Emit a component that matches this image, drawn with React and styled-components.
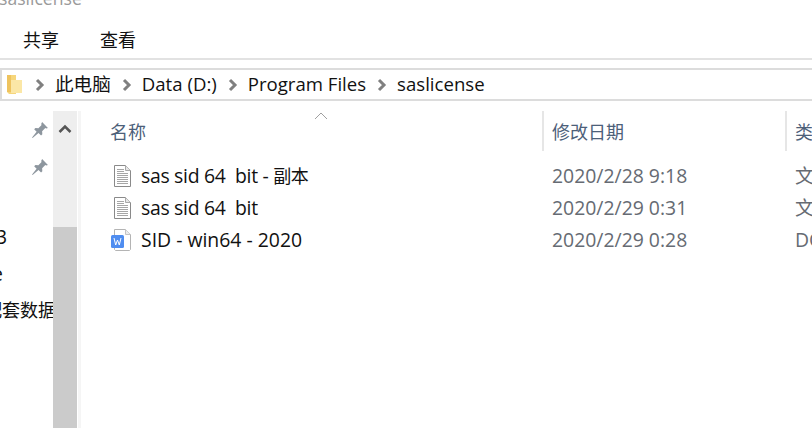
import React from "react"
import styled, { createGlobalStyle } from "styled-components"

const UI_FONT = `"Open Sans", "Noto Sans CJK SC", sans-serif`

const GlobalStyle = createGlobalStyle`
	html, body {
		margin: 0;
		padding: 0;
		background: #fff;
		overflow: hidden;
	}
	* {
		box-sizing: border-box;
	}
`

const Page = styled.div`
	width: 812px;
	height: 428px;
	display: flex;
	flex-direction: column;
	overflow: hidden;
	font-family: ${UI_FONT};
	font-size: 18px;
	color: #000;
	background: #fff;
`
const TitleBar = styled.div`
	height: 20px;
	margin-top: -12px;
	flex: none;
	font-size: 17.6px;
	line-height: 20px;
	color: #9a9a9a;
	transform: translateX(-1px);
`
const Ribbon = styled.div`
	height: 52px;
	flex: none;
	display: flex;
	align-items: center;
	gap: 41px;
	padding: 14px 0 0 23px;
	border-bottom: 2px solid #e2e2e2;
`
const Tab = styled.div`
	line-height: 24px;
	color: #111;
`
const AddressBar = styled.div`
	height: 33px;
	margin-top: 8px;
	flex: none;
	display: flex;
	align-items: center;
	padding-left: 5px;
	border: 2px solid #dcdcdc;
	border-right: none;
`
const Crumb = styled.span`
	margin-top: -2px;
	line-height: 24px;
	white-space: nowrap;
	font-size: 18.6px;
	color: #111;
`
const Chevron = styled.svg`
	width: 12px;
	height: 14px;
	margin: 0 9px 0 ${(p) => p.$left || 10}px;
	flex: none;
`
const Body = styled.div`
	flex: 1;
	min-height: 0;
	display: flex;
	padding-top: 10px;
`
const NavPane = styled.div`
	width: 53px;
	flex: none;
	display: flex;
	flex-direction: column;
	overflow: hidden;
`
const PinRow = styled.div`
	height: 37px;
	flex: none;
	display: flex;
	align-items: center;
	justify-content: flex-end;
	padding-right: 4px;
`
const NavSpacer = styled.div`
	height: 33px;
	flex: none;
`
const NavItem = styled.div`
	height: 37px;
	flex: none;
	line-height: 37px;
	white-space: nowrap;
	font-size: ${(p) => (p.$cjk ? 18 : 19.4)}px;
	margin-left: ${(p) => p.$offset || 0}px;
	color: #111;
`
const ScrollTrack = styled.div`
	width: 24px;
	flex: none;
	display: flex;
	flex-direction: column;
	background: #eeeeee;
`
const ScrollUp = styled.div`
	height: 35px;
	flex: none;
	display: flex;
	align-items: center;
	justify-content: center;
`
const ScrollThumb = styled.div`
	margin-top: 81px;
	flex: 1;
	background: #cbcbcb;
`
const Divider = styled.div`
	width: 3px;
	margin-left: 1px;
	flex: none;
	background: #f5f5f5;
`
const Content = styled.div`
	flex: 1;
	min-width: 0;
	display: flex;
	flex-direction: column;
`
const HeaderRow = styled.div`
	position: relative;
	height: 40px;
	flex: none;
	display: grid;
	grid-template-columns: 461px 243px 1fr;
	color: #4c6079;
`
const HeaderCell = styled.div`
	display: flex;
	align-items: center;
	padding-left: ${(p) => (p.$first ? 29 : 8)}px;
	border-left: ${(p) => (p.$first ? "none" : "2px solid #e6e6e6")};
	white-space: nowrap;
	overflow: hidden;
`
const SortArrow = styled.svg`
	position: absolute;
	left: 233px;
	top: 1px;
	width: 14px;
	height: 8px;
`
const FileList = styled.div`
	margin-top: 10px;
	display: flex;
	flex-direction: column;
`
const FileRow = styled.div`
	height: 32px;
	display: grid;
	grid-template-columns: 461px 243px 1fr;
	align-items: center;
	font-size: 19.4px;
	line-height: 26px;
`
const NameCell = styled.div`
	display: flex;
	align-items: center;
	gap: 8px;
	padding-left: 30px;
	white-space: pre;
	color: #111;
`
const FileName = styled.span`
	margin-top: -3px;
	letter-spacing: ${(p) => (p.$tight ? "-0.3px" : "0")};
`
const CjkPart = styled.span`
	font-size: 18px;
`
const MetaCell = styled.div`
	margin-top: -3px;
	padding-left: 10px;
	white-space: nowrap;
	overflow: hidden;
	color: #666b73;
`
const FileIconBox = styled.svg`
	width: 22px;
	height: 24px;
	margin-top: -2px;
	flex: none;
`

const FolderIcon = () => (
	<svg width="15" height="22" viewBox="0 0 15 22" style={{ flex: "none" }}>
		<path d="M0 1h9v19H2l-2-2z" fill="#f6d67c" />
		<path d="M4 6h11v13H4z" fill="#fbe7a6" />
		<path d="M0 1h4v17H0z" fill="#eec35e" />
	</svg>
)

const BreadcrumbArrow = ({ left }) => (
	<Chevron $left={left} viewBox="0 0 12 14">
		<path d="M3 2l5 5-5 5" fill="none" stroke="#808080" strokeWidth="3" />
	</Chevron>
)

const PinIcon = () => (
	<svg width="18" height="18" viewBox="0 0 17 17">
		<path d="M10.500 1l5.500 5.500-1.500.6-1-.4-3 3 .2 2.800-1.200 1.200-2.400-2.400L1.500 16 1 15.500l4.300-5.300L3 7.800l1.200-1.200 2.800.2 3-3-.4-1z" fill="#8d969e" />
	</svg>
)

const TextFileIcon = () => (
	<FileIconBox viewBox="0 0 22 24">
		<path d="M3.500 1.500h11l5 5v16h-16z" fill="#fff" stroke="#8a8a8a" />
		<path d="M14.500 1.500v5h5" fill="#e6e6e6" stroke="#a8a8a8" />
		<path d="M6 5.500h7M6 7.500h7M6 9.500h11M6 11.500h11M6 13.500h11M6 15.500h11M6 17.500h11M6 19.500h11" stroke="#a6a6a6" />
	</FileIconBox>
)

const WordFileIcon = () => (
	<FileIconBox viewBox="0 0 22 24">
		<path d="M3.500 1.500h11l5 5v15l-1 1h-14l-1-1z" fill="#fff" stroke="#b4b4b4" />
		<path d="M14.500 1.500v5h5" fill="#ededed" stroke="#c4c4c4" />
		<rect x="0" y="7" width="13" height="13" rx="1.500" fill="#4f8df0" />
		<path d="M3 10l1.700 7 1.800-5 1.800 5L10 10" fill="none" stroke="#fff" strokeWidth="1" />
	</FileIconBox>
)

const files = [
	{ name: "sas sid 64  bit - ", suffix: "副本", tight: true, date: "2020/2/28 9:18", type: "文", Icon: TextFileIcon },
	{ name: "sas sid 64  bit", tight: true, date: "2020/2/29 0:31", type: "文", Icon: TextFileIcon },
	{ name: "SID - win64 - 2020", date: "2020/2/29 0:28", type: "DOC", Icon: WordFileIcon }
]

class App extends React.PureComponent {
	render() {
		return (
			<Page>
				<GlobalStyle />
				<TitleBar>saslicense</TitleBar>
				<Ribbon>
					<Tab>共享</Tab>
					<Tab>查看</Tab>
				</Ribbon>
				<AddressBar>
					<FolderIcon />
					<BreadcrumbArrow left={12} />
					<Crumb>此电脑</Crumb>
					<BreadcrumbArrow />
					<Crumb>Data (D:)</Crumb>
					<BreadcrumbArrow />
					<Crumb>Program Files</Crumb>
					<BreadcrumbArrow />
					<Crumb>saslicense</Crumb>
				</AddressBar>
				<Body>
					<NavPane>
						<PinRow><PinIcon /></PinRow>
						<PinRow><PinIcon /></PinRow>
						<NavSpacer />
						<NavItem $offset={-4}>3</NavItem>
						<NavItem $offset={-8}>e</NavItem>
						<NavItem $cjk $offset={-16}>配套数据库</NavItem>
					</NavPane>
					<ScrollTrack>
						<ScrollUp>
							<svg width="14" height="10" viewBox="0 0 14 10">
								<path d="M1.500 8L7 2.500 12.500 8" fill="none" stroke="#555" strokeWidth="2.500" />
							</svg>
						</ScrollUp>
						<ScrollThumb />
					</ScrollTrack>
					<Divider />
					<Content>
						<HeaderRow>
							<SortArrow viewBox="0 0 14 8">
								<path d="M1 7l6-6 6 6" fill="none" stroke="#a0a0a0" />
							</SortArrow>
							<HeaderCell $first>名称</HeaderCell>
							<HeaderCell>修改日期</HeaderCell>
							<HeaderCell>类型</HeaderCell>
						</HeaderRow>
						<FileList>
							{files.map(({ name, suffix, tight, date, type, Icon }) => (
								<FileRow key={name}>
									<NameCell>
										<Icon />
										<FileName $tight={tight}>
											{name}
											{suffix && <CjkPart>{suffix}</CjkPart>}
										</FileName>
									</NameCell>
									<MetaCell>{date}</MetaCell>
									<MetaCell>{type}</MetaCell>
								</FileRow>
							))}
						</FileList>
					</Content>
				</Body>
			</Page>
		)
	}
}

export default App
